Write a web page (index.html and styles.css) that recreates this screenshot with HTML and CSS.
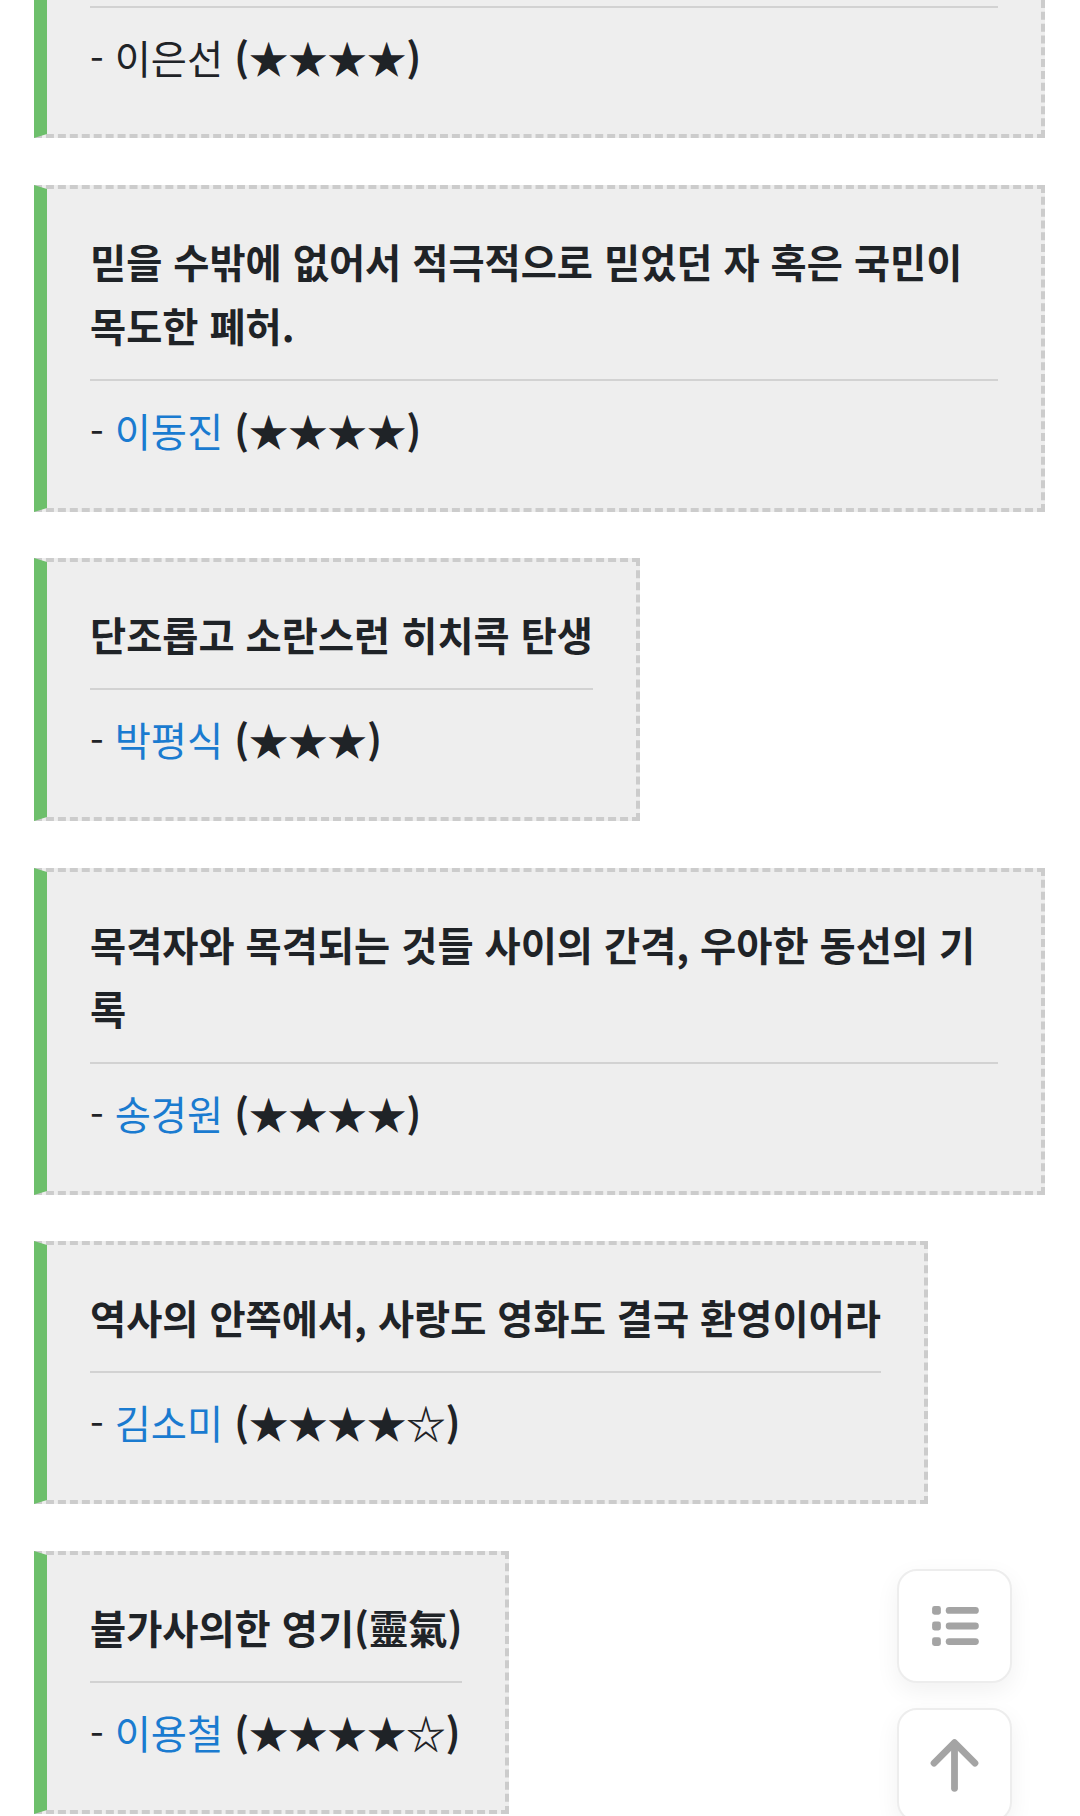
FILE: index.html
```html
<!DOCTYPE html>
<html lang="ko">
<head>
<meta charset="utf-8">
<title>평론가 한줄평</title>
<link rel="stylesheet" href="styles.css">
</head>
<body>
<main class="reviews">
  <blockquote class="quote quote--cut">
    <hr class="quote__rule quote__rule--cut">
    <p class="quote__by">- 이은선 <strong class="quote__stars">(★★★★)</strong></p>
  </blockquote>
  <blockquote class="quote">
    <p class="quote__text">믿을 수밖에 없어서 적극적으로 믿었던 자 혹은 국민이 목도한 폐허.</p>
    <hr class="quote__rule">
    <p class="quote__by">- <a class="quote__name" href="#">이동진</a> <strong class="quote__stars">(★★★★)</strong></p>
  </blockquote>
  <blockquote class="quote">
    <p class="quote__text">단조롭고 소란스런 히치콕 탄생</p>
    <hr class="quote__rule">
    <p class="quote__by">- <a class="quote__name" href="#">박평식</a> <strong class="quote__stars">(★★★)</strong></p>
  </blockquote>
  <blockquote class="quote">
    <p class="quote__text">목격자와 목격되는 것들 사이의 간격, 우아한 동선의 기록</p>
    <hr class="quote__rule">
    <p class="quote__by">- <a class="quote__name" href="#">송경원</a> <strong class="quote__stars">(★★★★)</strong></p>
  </blockquote>
  <blockquote class="quote">
    <p class="quote__text">역사의 안쪽에서, 사랑도 영화도 결국 환영이어라</p>
    <hr class="quote__rule">
    <p class="quote__by">- <a class="quote__name" href="#">김소미</a> <strong class="quote__stars">(★★★★☆)</strong></p>
  </blockquote>
  <blockquote class="quote">
    <p class="quote__text">불가사의한 영기(靈氣)</p>
    <hr class="quote__rule">
    <p class="quote__by">- <a class="quote__name" href="#">이용철</a> <strong class="quote__stars">(★★★★☆)</strong></p>
  </blockquote>
</main>
<nav class="fab">
  <button class="fab__btn" type="button" aria-label="목차">
    <svg class="fab__icon" viewBox="0 0 114 114" width="114" height="114">
      <rect x="34" y="36.5" width="9" height="9" rx="2.5" fill="#a4a4a4"/>
      <rect x="34" y="52.5" width="9" height="9" rx="2.5" fill="#a4a4a4"/>
      <rect x="34" y="68.5" width="9" height="9" rx="2.5" fill="#a4a4a4"/>
      <g stroke="#a4a4a4" stroke-width="7" stroke-linecap="round">
        <line x1="51.5" y1="41" x2="78.5" y2="41"/>
        <line x1="51.5" y1="57" x2="78.5" y2="57"/>
        <line x1="51.5" y1="73" x2="78.5" y2="73"/>
      </g>
    </svg>
  </button>
  <button class="fab__btn" type="button" aria-label="맨 위로">
    <svg class="fab__icon" viewBox="0 0 114 114" width="114" height="114">
      <g stroke="#a4a4a4" stroke-width="7" stroke-linecap="round" stroke-linejoin="round" fill="none">
        <line x1="57" y1="36" x2="57" y2="81"/>
        <polyline points="36,55 57,34 78,55"/>
      </g>
    </svg>
  </button>
</nav>
</body>
</html>
```

FILE: styles.css
```css
* {
  box-sizing: border-box;
}

html,
body {
  margin: 0;
  padding: 0;
  background: #ffffff;
}

body {
  font-family: "Noto Sans CJK KR", "Noto Sans", sans-serif;
  color: #1f2327;
  overflow: hidden;
}

.reviews {
  display: flex;
  flex-direction: column;
  align-items: flex-start;
  gap: 46.5px;
  padding: 0 35px 0 34px;
}

.quote {
  margin: 0;
  max-width: 100%;
  background: #eeeeee;
  border: 4px dashed #cccccc;
  border-left: 13px solid #6dbf6b;
  padding: 40px 43px 46px 43px;
  font-size: 39.3px;
  line-height: 64px;
}

.quote--cut {
  align-self: stretch;
  border-top: none;
  padding-top: 0;
  padding-bottom: 45px;
}

.quote__text {
  margin: 0;
  font-weight: 700;
}

.quote__rule {
  margin: 22px 0 17px;
  height: 0;
  border: none;
  border-top: 2px solid #d2d2d2;
}

.quote__rule--cut {
  margin-top: 6px;
}

.quote__by {
  margin: 0;
  font-weight: 400;
}

.quote__name {
  color: #1a7bd0;
  text-decoration: none;
}

.quote__stars {
  font-weight: 700;
}

.fab {
  position: fixed;
  right: 68px;
  bottom: -6px;
  display: flex;
  flex-direction: column;
  gap: 25px;
}

.fab__btn {
  width: 115px;
  height: 114px;
  padding: 0;
  border: 2px solid #ededed;
  border-radius: 20px;
  background: #ffffff;
  box-shadow: 0 8px 24px rgba(0, 0, 0, 0.06);
  display: flex;
  align-items: center;
  justify-content: center;
}

.fab__icon {
  display: block;
}
```
